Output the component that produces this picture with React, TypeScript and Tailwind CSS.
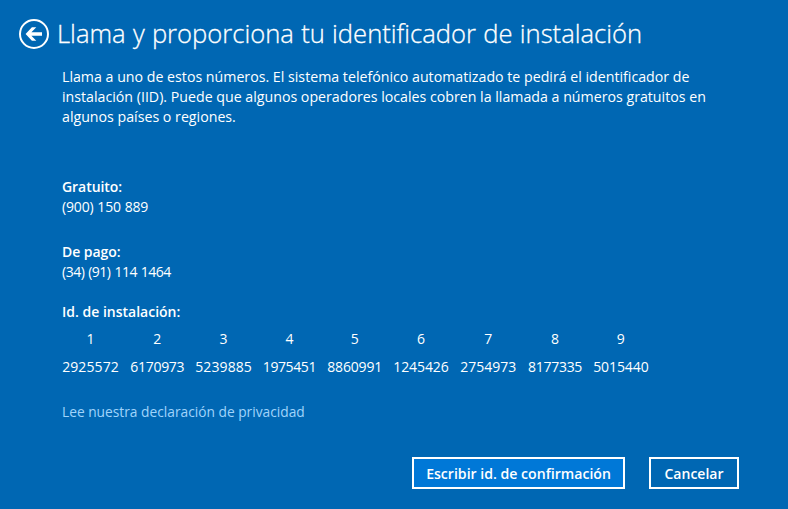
const groups = [
  { n: 1, digits: "2925572", col: "w-[57px]", tracking: "tracking-[0.1px]" },
  { n: 2, digits: "6170973", col: "w-[54px]", tracking: "tracking-[-0.3px]" },
  { n: 3, digits: "5239885", col: "w-[56px]", tracking: "tracking-[0.1px]" },
  { n: 4, digits: "1975451", col: "w-[53px]", tracking: "tracking-[-0.4px]" },
  { n: 5, digits: "8860991", col: "w-[55px]", tracking: "tracking-[-0.15px]" },
  { n: 6, digits: "1245426", col: "w-[55px]", tracking: "tracking-[-0.1px]" },
  { n: 7, digits: "2754973", col: "w-[57px]", tracking: "tracking-normal" },
  { n: 8, digits: "8177335", col: "w-[54px]", tracking: "tracking-[-0.3px]" },
  { n: 9, digits: "5015440", col: "w-[55px]", tracking: "tracking-[-0.1px]" },
];

function BackIcon() {
  return (
    <svg width="30" height="30" viewBox="0 0 30 30" fill="none" aria-hidden="true">
      <circle cx="15" cy="15" r="14" stroke="white" strokeWidth="2" />
      <path d="M6.6 15 L12.9 8.2 H17.3 L12.4 13.2 H23 V16.8 H12.4 L17.3 21.8 H12.9 Z" fill="white" />
    </svg>
  );
}

function Phone({ label, number, tracking }: { label: string; number: string; tracking: string }) {
  return (
    <div>
      <div className="font-semibold tracking-[-0.05px]">{label}</div>
      <div className={tracking}>{number}</div>
    </div>
  );
}

export default function App() {
  return (
    <div className="flex h-[509px] w-[788px] flex-col overflow-hidden bg-[#0067b3] font-['Open_Sans','Noto_Sans',sans-serif] text-[14px] leading-5 whitespace-nowrap text-white">
      <header className="flex h-[51px] pt-[15px] pl-[19px]">
        <button className="mt-1 h-[30px] w-[30px]" aria-label="Atrás">
          <BackIcon />
        </button>
        <h1 className="mt-px ml-[8px] text-[25.6px] leading-9 font-light [word-spacing:0.6px] [-webkit-text-stroke:0.3px_white]">
          Llama y proporciona tu identificador de instalación
        </h1>
      </header>

      <main className="flex flex-col pt-4 pl-[62px]">
        <p className="text-[14.2px]">
          Llama a uno de estos números. El sistema telefónico automatizado te pedirá el identificador de
          <br />
          instalación (IID). Puede que algunos operadores locales cobren la llamada a números gratuitos en
          <br />
          algunos países o regiones.
        </p>

        <div className="mt-[50px] flex flex-col gap-[25px]">
          <Phone label="Gratuito:" number="(900) 150 889" tracking="tracking-[-0.15px] [word-spacing:0.3px]" />
          <Phone label="De pago:" number="(34) (91) 114 1464" tracking="tracking-[-0.5px] [word-spacing:0.8px]" />
        </div>

        <div className="mt-5 font-semibold">Id. de instalación:</div>
        <div className="mt-[7px] flex gap-[11.3px]">
          {groups.map((g) => (
            <div key={g.n} className={`flex flex-col items-center gap-2 ${g.col}`}>
              <span>{g.n}</span>
              <span className={g.tracking}>{g.digits}</span>
            </div>
          ))}
        </div>

        <a className="mt-[25px] text-[13.75px] text-[#a0d4fb]">Lee nuestra declaración de privacidad</a>
      </main>

      <footer className="mt-[35px] flex justify-end gap-6 pr-[49px] font-semibold">
        <button className="h-8 w-[213px] border-2 border-white bg-[#0078d7] pt-0.5 text-[14.1px]">
          Escribir id. de confirmación
        </button>
        <button className="h-8 w-[90px] border-2 border-white pt-0.5">Cancelar</button>
      </footer>
    </div>
  );
}
